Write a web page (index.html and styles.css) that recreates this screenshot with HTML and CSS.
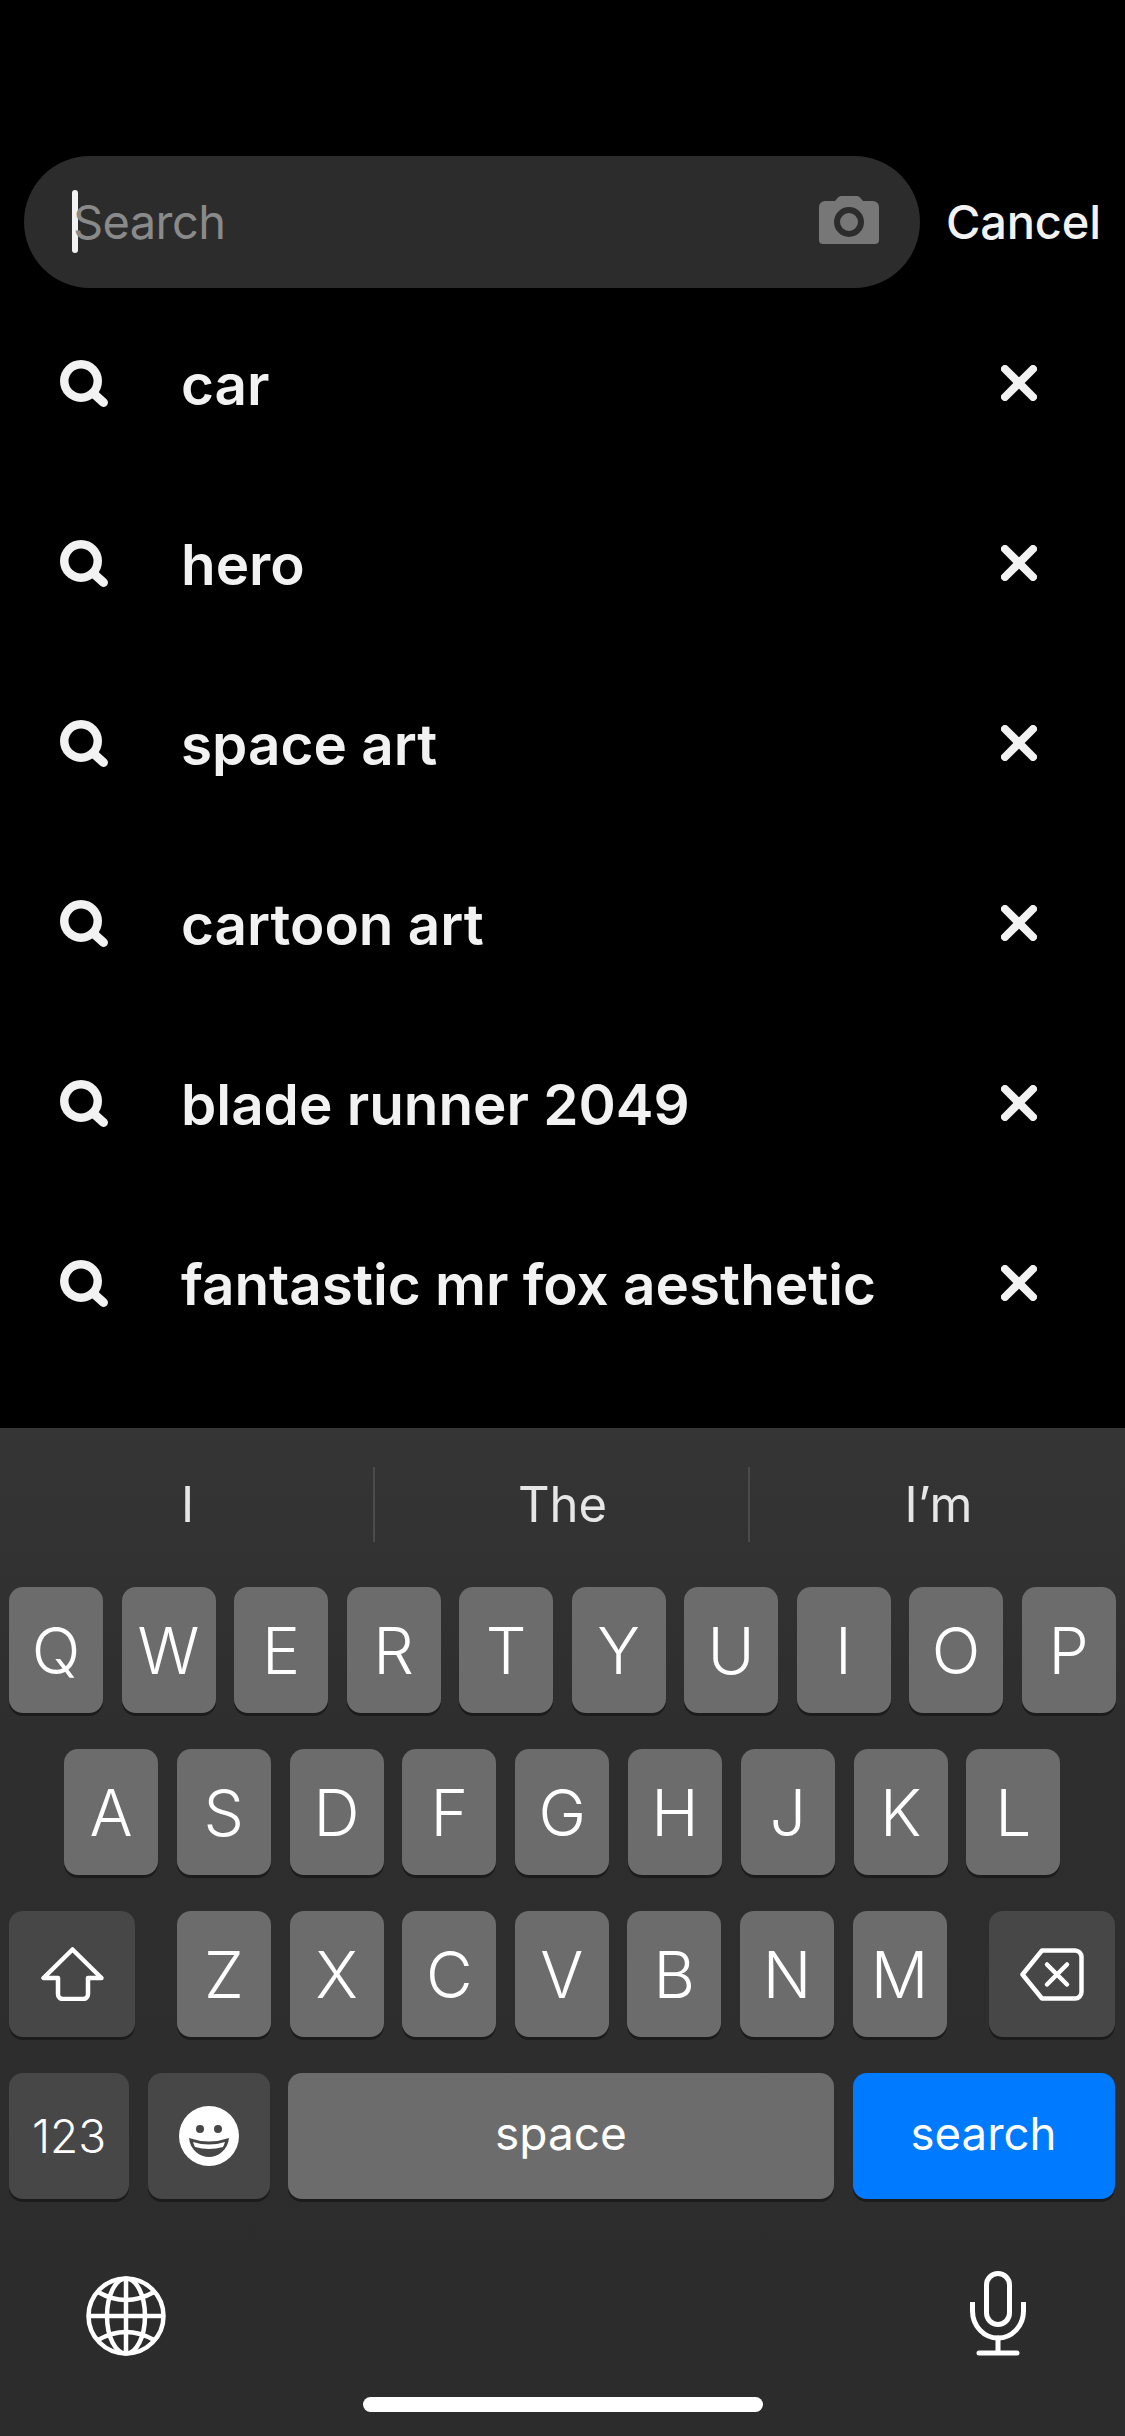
FILE: index.html
```html
<!DOCTYPE html>
<html>
  <head>
    <meta charset="UTF-8" />
    <title>Search</title>
    <link rel="stylesheet" href="styles.css">
  </head>
  <body>
    <div class="top">
      <div class="search-row">
        <div class="search-bar">
          <span class="caret"></span>
          <span class="placeholder">Search</span>
          <svg class="camera" width="60" height="48" viewBox="0 0 60 48">
            <path d="M6 5H16L19 1.5Q20 0 22 0H38Q40 0 41 1.5L44 5H54A6 6 0 0 1 60 11V44A4 4 0 0 1 56 48H4A4 4 0 0 1 0 44V11A6 6 0 0 1 6 5Z" fill="#777"/>
            <circle cx="30" cy="26" r="12" fill="#777" stroke="#2c2c2c" stroke-width="6"/>
          </svg>
        </div>
        <span class="cancel">Cancel</span>
      </div>

      <ul class="history">
        <li>
          <svg class="mag" width="48" height="47" viewBox="0 0 48 47"><circle cx="21" cy="21" r="16.75" fill="none" stroke="#f2f2f2" stroke-width="8.5"/><path d="M33 33L43.5 42.5" stroke="#f2f2f2" stroke-width="9" stroke-linecap="round"/></svg>
          <span class="term">car</span>
          <svg class="remove" width="36" height="36" viewBox="0 0 36 36"><path d="M4 4L32 32M32 4L4 32" stroke="#f2f2f2" stroke-width="8" stroke-linecap="round"/></svg>
        </li>
        <li>
          <svg class="mag" width="48" height="47" viewBox="0 0 48 47"><circle cx="21" cy="21" r="16.75" fill="none" stroke="#f2f2f2" stroke-width="8.5"/><path d="M33 33L43.5 42.5" stroke="#f2f2f2" stroke-width="9" stroke-linecap="round"/></svg>
          <span class="term">hero</span>
          <svg class="remove" width="36" height="36" viewBox="0 0 36 36"><path d="M4 4L32 32M32 4L4 32" stroke="#f2f2f2" stroke-width="8" stroke-linecap="round"/></svg>
        </li>
        <li>
          <svg class="mag" width="48" height="47" viewBox="0 0 48 47"><circle cx="21" cy="21" r="16.75" fill="none" stroke="#f2f2f2" stroke-width="8.5"/><path d="M33 33L43.5 42.5" stroke="#f2f2f2" stroke-width="9" stroke-linecap="round"/></svg>
          <span class="term">space art</span>
          <svg class="remove" width="36" height="36" viewBox="0 0 36 36"><path d="M4 4L32 32M32 4L4 32" stroke="#f2f2f2" stroke-width="8" stroke-linecap="round"/></svg>
        </li>
        <li>
          <svg class="mag" width="48" height="47" viewBox="0 0 48 47"><circle cx="21" cy="21" r="16.75" fill="none" stroke="#f2f2f2" stroke-width="8.5"/><path d="M33 33L43.5 42.5" stroke="#f2f2f2" stroke-width="9" stroke-linecap="round"/></svg>
          <span class="term">cartoon art</span>
          <svg class="remove" width="36" height="36" viewBox="0 0 36 36"><path d="M4 4L32 32M32 4L4 32" stroke="#f2f2f2" stroke-width="8" stroke-linecap="round"/></svg>
        </li>
        <li>
          <svg class="mag" width="48" height="47" viewBox="0 0 48 47"><circle cx="21" cy="21" r="16.75" fill="none" stroke="#f2f2f2" stroke-width="8.5"/><path d="M33 33L43.5 42.5" stroke="#f2f2f2" stroke-width="9" stroke-linecap="round"/></svg>
          <span class="term">blade runner 2049</span>
          <svg class="remove" width="36" height="36" viewBox="0 0 36 36"><path d="M4 4L32 32M32 4L4 32" stroke="#f2f2f2" stroke-width="8" stroke-linecap="round"/></svg>
        </li>
        <li>
          <svg class="mag" width="48" height="47" viewBox="0 0 48 47"><circle cx="21" cy="21" r="16.75" fill="none" stroke="#f2f2f2" stroke-width="8.5"/><path d="M33 33L43.5 42.5" stroke="#f2f2f2" stroke-width="9" stroke-linecap="round"/></svg>
          <span class="term">fantastic mr fox aesthetic</span>
          <svg class="remove" width="36" height="36" viewBox="0 0 36 36"><path d="M4 4L32 32M32 4L4 32" stroke="#f2f2f2" stroke-width="8" stroke-linecap="round"/></svg>
        </li>
      </ul>
    </div>

    <div class="keyboard">
      <div class="suggestions">
        <span>I</span>
        <span>The</span>
        <span>I’m</span>
      </div>

      <div class="row">
        <div class="key">Q</div><div class="key">W</div><div class="key">E</div><div class="key">R</div><div class="key">T</div>
        <div class="key">Y</div><div class="key">U</div><div class="key">I</div><div class="key">O</div><div class="key">P</div>
      </div>
      <div class="row row-home">
        <div class="key">A</div><div class="key">S</div><div class="key">D</div><div class="key">F</div><div class="key">G</div>
        <div class="key">H</div><div class="key">J</div><div class="key">K</div><div class="key">L</div>
      </div>
      <div class="row row-shift">
        <div class="key key-dark key-shift">
          <svg width="63" height="54" viewBox="0 0 63 54"><path d="M31.5 2.5L2.5 31H17V47A5 5 0 0 0 22 52H42A5 5 0 0 0 47 47V31H60.5Z" fill="none" stroke="#fff" stroke-width="4.5" stroke-linejoin="round"/></svg>
        </div>
        <div class="letters">
          <div class="key">Z</div><div class="key">X</div><div class="key">C</div><div class="key">V</div>
          <div class="key">B</div><div class="key">N</div><div class="key">M</div>
        </div>
        <div class="key key-dark key-delete">
          <svg width="64" height="53" viewBox="0 0 64 53"><path d="M22 2.5H55A6.5 6.5 0 0 1 61.5 9V44A6.5 6.5 0 0 1 55 50.5H22L2.5 26.5Z" fill="none" stroke="#fff" stroke-width="4.5" stroke-linejoin="round"/><path d="M27 16.5L47 36.5M47 16.5L27 36.5" stroke="#fff" stroke-width="4.5" stroke-linecap="round"/></svg>
        </div>
      </div>
      <div class="row row-bottom">
        <div class="key key-dark key-num">123</div>
        <div class="key key-dark key-emoji">
          <svg width="60" height="60" viewBox="0 0 60 60">
            <circle cx="30" cy="30" r="30" fill="#fff"/>
            <circle cx="21" cy="23" r="4" fill="#474747"/>
            <circle cx="39" cy="23" r="4" fill="#474747"/>
            <path d="M10 32Q30 39 50 32C49 44 39 51 30 51C21 51 11 44 10 32Z" fill="#474747"/>
            <path d="M14 36Q30 41 46 36Q45 39 44 41Q30 45 16 41Q15 39 14 36Z" fill="#fff"/>
          </svg>
        </div>
        <div class="key key-space"><span class="label">space</span></div>
        <div class="key key-search"><span class="label">search</span></div>
      </div>

      <div class="extras">
        <svg class="globe" width="80" height="80" viewBox="0 0 80 80" fill="none" stroke="#fff" stroke-width="4.5">
          <circle cx="40" cy="40" r="37.5"/>
          <ellipse cx="40" cy="40" rx="19" ry="37.5"/>
          <path d="M40 2.5V77.5M2.5 40H77.5"/>
          <path d="M12 16Q40 32 68 16M12 64Q40 48 68 64"/>
        </svg>
        <svg class="mic" width="56" height="85" viewBox="0 0 56 85" fill="none" stroke="#fff" stroke-width="5" stroke-linecap="round">
          <rect x="16.5" y="2.5" width="23" height="51" rx="11.5"/>
          <path d="M2.5 31V40A25.5 27 0 0 0 53.5 40V31" stroke-linecap="butt"/>
          <path d="M28 67V81M9 82H47"/>
        </svg>
      </div>
      <div class="home-bar"></div>
    </div>
  </body>
</html>
```

FILE: styles.css
```css
* {
    box-sizing: border-box;
}

body {
    margin: 0;
    width: 1125px;
    height: 2436px;
    display: flex;
    flex-direction: column;
    background-color: #000;
    color: #f2f2f2;
    font-family: Inter, "Liberation Sans", sans-serif;
    overflow: hidden;
}

.top {
    height: 1428px;
    padding-top: 156px;
}

.search-row {
    display: flex;
    align-items: center;
    padding-left: 24px;
}

.search-bar {
    width: 896px;
    height: 132px;
    display: flex;
    align-items: center;
    padding: 0 41px 0 48px;
    border-radius: 66px;
    background-color: #2c2c2c;
}

.caret {
    width: 6px;
    height: 63px;
    margin-top: -2px;
    border-radius: 3px;
    background-color: #f2f2f2;
}

.placeholder {
    margin-left: -5px;
    font-size: 47px;
    letter-spacing: -0.6px;
    line-height: 60px;
    color: #8a8a8a;
}

.camera {
    margin-left: auto;
    margin-top: -4px;
}

.cancel {
    margin-left: 26px;
    margin-top: -2px;
    font-size: 47px;
    letter-spacing: -0.2px;
    font-weight: 500;
}

.history {
    list-style: none;
    margin: 5px 0 0;
    padding: 0;
}

.history li {
    height: 180px;
    display: flex;
    align-items: center;
    padding: 0 88px 0 60px;
}

.mag {
    margin-right: 73px;
}

.term {
    margin-top: 2px;
    font-size: 56.6px;
    font-weight: 600;
}

.remove {
    margin-left: auto;
}

.keyboard {
    flex: 1;
    background: linear-gradient(#353535, #2e2e2e 300px, #2c2c2c);
    color: #fff;
}

.suggestions {
    display: flex;
    padding-top: 39px;
    margin-bottom: 45px;
    font-size: 49px;
    color: #e6e6e6;
}

.suggestions span {
    width: 375px;
    height: 75px;
    display: flex;
    align-items: center;
    justify-content: center;
    padding-left: 2px;
    border-right: 2px solid #4b4b4b;
}

.suggestions span:last-child {
    border-right: none;
}

.row {
    height: 126px;
    display: flex;
    gap: 18.5px;
    margin-bottom: 36px;
    padding-left: 9px;
}

.row-home {
    gap: 18.8px;
    padding-left: 64px;
}

.letters {
    display: flex;
    gap: 18.6px;
}

.row-shift {
    gap: 42px;
}

.key {
    width: 94px;
    height: 126px;
    display: flex;
    align-items: center;
    justify-content: center;
    border-radius: 14px;
    background-color: #6c6c6c;
    box-shadow: 0 3px 0 #1c1c1c;
    font-size: 64px;
    font-weight: 300;
}

.key-dark {
    background-color: #474747;
}

.key-shift,
.key-delete {
    width: 126px;
}

.key-num {
    width: 120px;
    font-size: 46px;
}

.key-emoji {
    width: 122px;
}

.key-space {
    width: 546px;
    font-size: 46px;
    font-weight: 400;
}

.key-search {
    width: 262px;
    background-color: #007aff;
    font-size: 45.5px;
    font-weight: 400;
}

.label {
    margin-top: -6px;
}

.extras {
    display: flex;
    justify-content: space-between;
    align-items: flex-start;
    margin-top: 72px;
    padding: 0 99px 0 86px;
}

.globe {
    margin-top: 5px;
}

.home-bar {
    width: 400px;
    height: 15px;
    margin: 41px auto 0 363px;
    border-radius: 8px;
    background-color: #fff;
}
```
